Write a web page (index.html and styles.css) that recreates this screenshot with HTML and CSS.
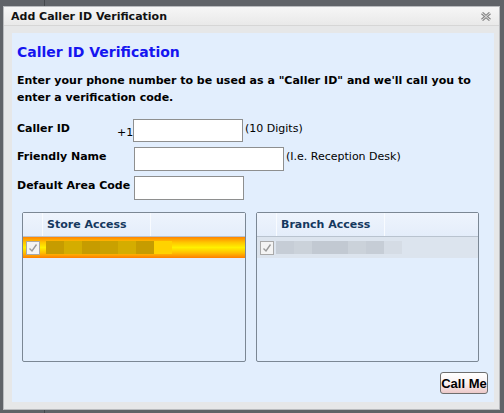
FILE: index.html
```html
<!DOCTYPE html>
<html>
<head>
<meta charset="utf-8">
<link rel="stylesheet" href="styles.css">
</head>
<body>
<div class="dialog">
  <div class="titlebar">
    <span class="title">Add Caller ID Verification</span>
    <svg class="close" width="10" height="9" viewBox="0 0 10 9">
      <path d="M1 1 L9 8 M9 1 L1 8" stroke="#8a8a8a" stroke-width="3" fill="none"/>
      <path d="M1 1 L9 8 M9 1 L1 8" stroke="#e2e2e2" stroke-width="1" fill="none"/>
    </svg>
  </div>
  <div class="panel">
    <h2 class="heading">Caller ID Verification</h2>
    <p class="intro">Enter your phone number to be used as a "Caller ID" and we'll call you to enter a verification code.</p>
    <div class="form">
      <div class="row row-caller">
        <label class="lbl">Caller ID</label>
        <span class="prefix">+1</span>
        <input class="field short" type="text">
        <span class="hint">(10 Digits)</span>
      </div>
      <div class="row row-friendly">
        <label class="lbl">Friendly Name</label>
        <input class="field long" type="text">
        <span class="hint">(I.e. Reception Desk)</span>
      </div>
      <div class="row row-area">
        <label class="lbl">Default Area Code</label>
        <input class="field short" type="text">
      </div>
    </div>
    <div class="grids">
      <div class="grid grid-store">
        <div class="ghead">
          <div class="gcol gcheck"></div>
          <div class="gcol gname">Store Access</div>
          <div class="gcol grest"></div>
        </div>
        <div class="grow selected">
          <span class="cb"><svg width="10" height="10" viewBox="0 0 10 10"><path d="M1.5 5.5 L4 8 L8.5 1.5" stroke="#9a9a9a" stroke-width="1.4" fill="none"/></svg></span>
          <div class="blur">
            <i class="b1"></i><i class="b2"></i><i class="b1"></i><i class="b3"></i><i class="b2"></i><i class="b1"></i><i class="b4"></i>
          </div>
        </div>
      </div>
      <div class="grid grid-branch">
        <div class="ghead">
          <div class="gcol gcheck"></div>
          <div class="gcol gname">Branch Access</div>
          <div class="gcol grest"></div>
        </div>
        <div class="grow plain">
          <span class="cb"><svg width="10" height="10" viewBox="0 0 10 10"><path d="M1.5 5.5 L4 8 L8.5 1.5" stroke="#9a9a9a" stroke-width="1.4" fill="none"/></svg></span>
          <div class="blur blur-branch">
            <i class="c1"></i><i class="c2"></i><i class="c3"></i><i class="c3"></i><i class="c2"></i><i class="c1"></i><i class="c4"></i>
          </div>
        </div>
      </div>
    </div>
    <div class="actions">
      <button class="callme" type="button">Call Me</button>
    </div>
  </div>
</div>
</body>
</html>
```
FILE: styles.css
```css
html, body {
  margin: 0;
  padding: 0;
}
body {
  width: 504px;
  height: 413px;
  overflow: hidden;
  background: linear-gradient(to right, #606368 0, #606368 44px, #45484c 44px, #45484c 45px, #606368 45px);
  font-family: "DejaVu Sans", Verdana, sans-serif;
  padding: 6px 4px 0 3px;
  box-sizing: border-box;
}
.dialog {
  width: 497px;
  height: 404px;
  background: #e6e7e8;
  border: 1px solid #b9bbbe;
  box-sizing: border-box;
  display: flex;
  flex-direction: column;
}
.titlebar {
  height: 18px;
  background: linear-gradient(#f6f6f6, #e9e9e9);
  border-bottom: 1px solid #d6d6d6;
  display: flex;
  align-items: center;
  justify-content: space-between;
  padding: 0 8px 0 7px;
}
.title {
  font-size: 11px;
  font-weight: bold;
  color: #111;
}
.close {
  display: block;
}
.panel {
  margin: 7px 5px 7px 8px;
  flex: 1;
  background: #e2eefd;
  padding: 10px 5px 0 5px;
  display: flex;
  flex-direction: column;
}
.heading {
  margin: 0;
  font-size: 14px;
  font-weight: bold;
  color: #1515f0;
  line-height: 18px;
}
.intro {
  margin: 11px 0 0 0;
  font-size: 11px;
  font-weight: bold;
  line-height: 17px;
  color: #000;
}
.form {
  margin-top: 13px;
  display: flex;
  flex-direction: column;
  gap: 5px;
}
.row {
  display: flex;
  align-items: flex-start;
  font-size: 11px;
}
.lbl {
  width: 100px;
  font-weight: bold;
  padding-top: 3px;
}
.prefix {
  width: 16px;
  text-align: right;
  padding-top: 7px;
}
.row-friendly .lbl, .row-area .lbl {
  width: 117px;
}
.field {
  height: 24px;
  box-sizing: border-box;
  border: 1px solid #8e8f8f;
  background: #fff;
  margin: 0;
  padding: 0;
}
.row-caller .field { height: 23px; }
.short { width: 110px; }
.long { width: 150px; }
.hint {
  padding: 3px 0 0 2px;
  font-size: 11px;
}
.grids {
  margin-top: 12px;
  display: flex;
  gap: 10px;
  padding-left: 5px;
}
.grid {
  height: 150px;
  box-sizing: border-box;
  border: 1px solid #7b8794;
  border-radius: 2px;
  background: #e2eefd;
}
.grid-store { width: 224px; }
.grid-branch { width: 223px; }
.ghead {
  height: 23px;
  display: flex;
  background: linear-gradient(#eef4fd, #e4edfa);
  border-bottom: 1px solid #b9c3cf;
}
.gcol {
  border-right: 1px solid #f8fbff;
  display: flex;
  align-items: center;
  font-size: 11px;
  font-weight: bold;
  color: #15385e;
}
.gcheck { width: 19px; }
.gname { width: 103px; padding-left: 4px; }
.grest { flex: 1; border-right: none; }
.grow {
  height: 21px;
  display: flex;
  align-items: center;
  padding-left: 3px;
}
.selected {
  background: linear-gradient(#ff8400 0%, #ffc400 25%, #fff000 50%, #ffc000 75%, #ff7e00 100%);
}
.plain {
  background: #dce4ee;
}
.cb {
  width: 12px;
  height: 12px;
  border: 1px solid #a9a9a9;
  background: #f4f4f4;
  display: flex;
  align-items: center;
  justify-content: center;
}
.blur {
  display: flex;
  height: 13px;
  margin-left: 6px;
}
.blur-branch {
  margin-left: 2px;
}
.blur i {
  display: block;
  width: 18px;
  height: 13px;
}
.b1 { background: #c69c00; }
.b2 { background: #d4ad00; }
.b3 { background: #c9a100; }
.b4 { background: #ffd200; }
.c1 { background: #c6cdd6; }
.c2 { background: #cbd2da; }
.c3 { background: #c2c9d2; }
.c4 { background: #d5dce5; }
.actions {
  display: flex;
  justify-content: flex-end;
  margin-top: 10px;
  padding-right: 1px;
}
.callme {
  width: 48px;
  height: 22px;
  padding: 0;
  border: 1px solid #6e6e6e;
  border-radius: 3px;
  background: linear-gradient(#ffffff 0%, #fbf3f3 45%, #ecc9c9 100%);
  font-family: "Liberation Sans", Arial, sans-serif;
  font-size: 13px;
  font-weight: bold;
  color: #000;
}
```
